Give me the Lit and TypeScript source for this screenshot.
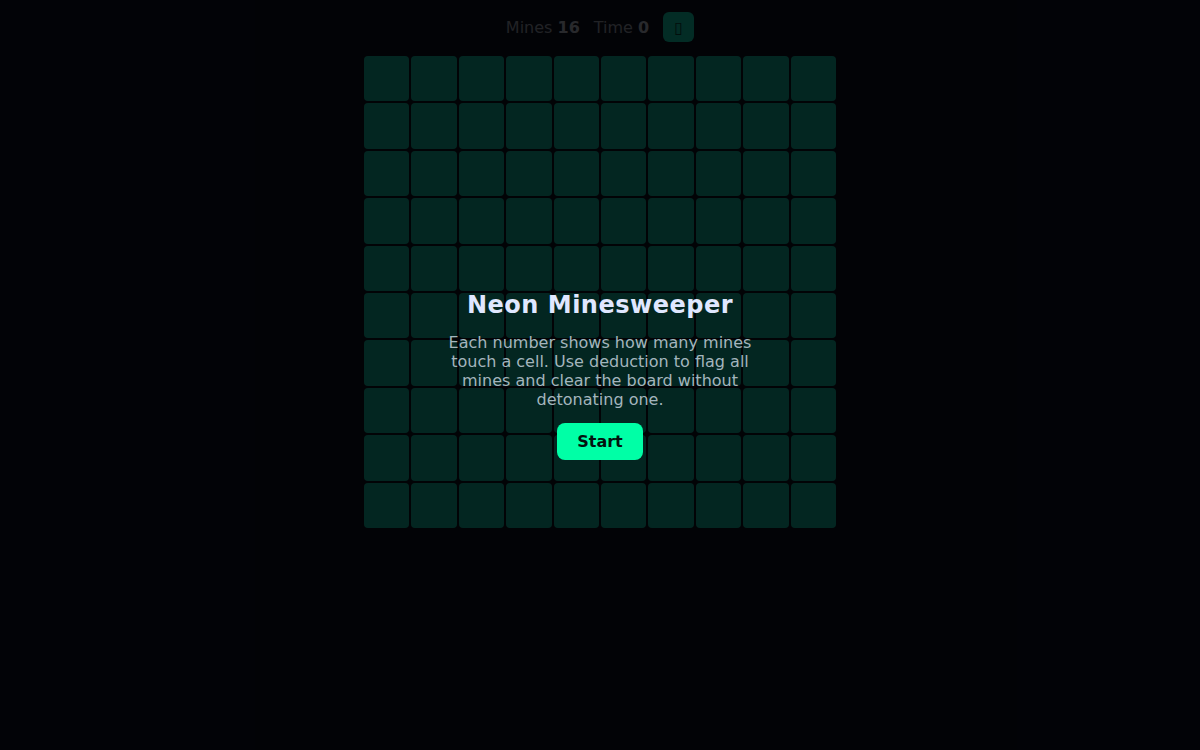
import { LitElement, html, css } from "lit";
import { customElement } from "lit/decorators.js";

@customElement("app-root")
export class AppRoot extends LitElement {
  static styles = css`
    :host {
      display: block;
      position: relative;
      height: 750px;
      overflow: hidden;
      background: #0a0e1c;
      font-family: "DejaVu Sans", sans-serif;
      color: #e0e7ff;
    }
    .page {
      display: flex;
      flex-direction: column;
      align-items: center;
      padding-top: 12px;
      gap: 14px;
    }
    .hud {
      display: flex;
      align-items: center;
      gap: 14px;
      height: 30px;
      font-size: 16px;
      color: #8a8f9c;
    }
    .hud b { color: #a8abb8; }
    .icon-btn {
      width: 31px;
      height: 30px;
      border: none;
      padding: 0;
      border-radius: 6px;
      background: #10b89a;
      color: #0a3a32;
      font-size: 16px;
      font-family: "DejaVu Sans", sans-serif;
    }
    .board {
      display: grid;
      grid-template-columns: repeat(10, 1fr);
      grid-auto-rows: 45.4px;
      gap: 2px;
      width: 472px;
    }
    .cell {
      background: #10a08c;
      border-radius: 4px;
    }
    .overlay {
      position: absolute;
      inset: 0;
      background: rgba(0, 0, 0, 0.76);
      display: flex;
      flex-direction: column;
      align-items: center;
      justify-content: center;
      text-align: center;
    }
    .dialog {
      display: flex;
      flex-direction: column;
      align-items: center;
      width: 320px;
    }
    h1 {
      margin: 0 0 14px;
      font-size: 24px;
      line-height: 28px;
      font-weight: 700;
      letter-spacing: 0.5px;
      color: #e0e7ff;
    }
    p {
      margin: 0 0 14px;
      font-size: 16px;
      line-height: 19px;
      color: #a3b5bd;
    }
    .start {
      border: none;
      width: 86px;
      height: 37px;
      border-radius: 8px;
      background: #00ffa6;
      color: #03130f;
      font: 700 16px "DejaVu Sans", sans-serif;
    }
  `;

  render() {
    return html`
      <div class="page">
        <div class="hud">
          <span>Mines <b>16</b></span>
          <span>Time <b>0</b></span>
          <button class="icon-btn">▯</button>
        </div>
        <div class="board">
          ${Array.from({ length: 100 }, () => html`<div class="cell"></div>`)}
        </div>
      </div>
      <div class="overlay">
        <div class="dialog">
          <h1>Neon Minesweeper</h1>
          <p>Each number shows how many mines touch a cell. Use deduction to flag all mines and clear the board without detonating one.</p>
          <button class="start">Start</button>
        </div>
      </div>
    `;
  }
}
